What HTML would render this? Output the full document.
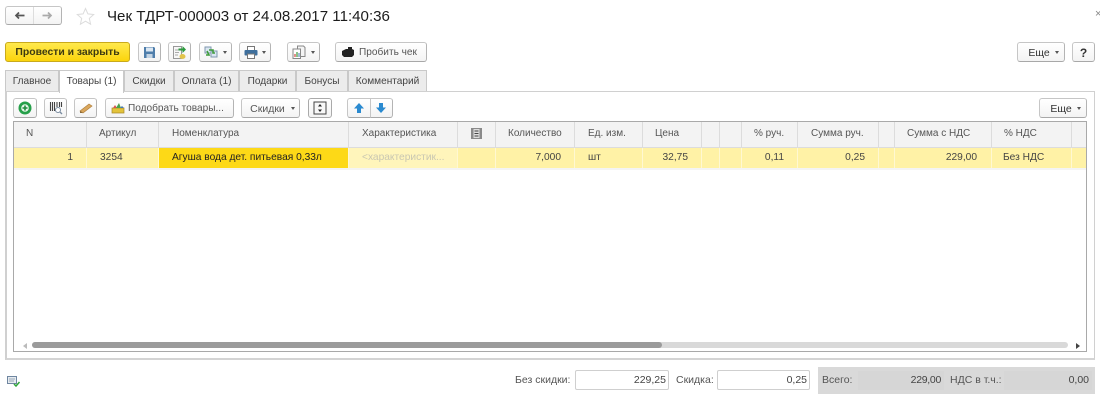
<!DOCTYPE html>
<html lang="ru"><head><meta charset="utf-8"><title>Чек</title>
<style>
html,body{margin:0;padding:0;background:#fff}
#p{position:relative;width:1100px;height:405px;overflow:hidden;background:#fff;font:10.5px/14px "Liberation Sans",sans-serif;color:#4a4a4a;filter:blur(.3px)}
#p div,#p svg{position:absolute;box-sizing:border-box}
.b{height:20px;top:42px;border:1px solid #c6c6c6;border-bottom-color:#a8a8a8;border-right-color:#b4b4b4;border-radius:3px;background:linear-gradient(#fff,#f3f3f3);text-align:center;line-height:20px;white-space:nowrap;font-size:10.1px}
.t2{top:98px}
.tab{top:70px;height:21px;background:#ececec;border:1px solid #c9c9c9;border-bottom:0;text-align:center;line-height:21px;color:#444;font-size:10.1px}
.a{width:0;height:0;border-left:2.5px solid transparent;border-right:2.5px solid transparent;border-top:3px solid #555}
.h{top:127px;white-space:nowrap;color:#555;font-size:10px}
.c{top:151px;white-space:nowrap;color:#444;font-size:10.2px}
.d{top:122px;height:25px;width:1px;background:#dcdcdc}
.e{top:148px;height:20px;width:1px;background:#fff8d2}
.f{background:#fff;border:1px solid #cfcfcf;border-radius:2px;height:20px;top:370px;text-align:right;padding-right:2px;line-height:18px;color:#444}
.r{text-align:right}
</style></head><body><div id="p">

<div class="b" style="left:5px;top:6px;width:57px;height:19px"></div>
<div style="left:33px;top:7px;width:1px;height:17px;background:#ddd"></div>
<svg style="left:14px;top:11px" width="11" height="9" viewBox="0 0 11 9"><path d="M10.500 4.500H2.500M5 1.500L2 4.500 5 7.500" fill="none" stroke="#555" stroke-width="1.700"/></svg>
<svg style="left:42px;top:11px" width="11" height="9" viewBox="0 0 11 9"><path d="M.5 4.500h8M6 1.500l3 3-3 3" fill="none" stroke="#aaa" stroke-width="1.700"/></svg>
<svg style="left:76px;top:7px" width="19" height="19" viewBox="0 0 19 19"><path d="M9.500 1.500l2.400 5.400 5.800.6-4.400 3.900 1.300 5.800-5.100-3-5.100 3 1.300-5.800L1.300 7.500l5.800-.6z" fill="#fff" stroke="#dcdcdc"/></svg>
<div style="left:107px;top:8px;font-size:15.1px;line-height:18px;color:#1c1c1c;white-space:nowrap">Чек ТДРТ-000003 от 24.08.2017 11:40:36</div>
<div style="left:1095px;top:7px;font-size:11px;color:#888">×</div>

<div class="b" style="left:5px;width:125px;background:linear-gradient(#ffe94d,#fbd40c);border-color:#c9aa1c;font-weight:bold;color:#3d3a10;font-size:10.4px">Провести и закрыть</div>
<div class="b" style="left:138px;width:23px"></div>
<svg style="left:143px;top:46px" width="13" height="13" viewBox="0 0 13 13"><path d="M1 1h10l1 1v10H1z" fill="#4f7eab"/><rect x="3" y="1.500" width="7" height="4" fill="#dbe7f2"/><rect x="3.500" y="8" width="6" height="4" fill="#c4d4e3"/></svg>
<div class="b" style="left:168px;width:23px"></div>
<svg style="left:172px;top:45px" width="15" height="15" viewBox="0 0 15 15"><path d="M1.500 1.500h8v12h-8z" fill="#f7f7f7" stroke="#999"/><path d="M3 5h5M3 7.500h4M3 10h3" stroke="#aaa"/><ellipse cx="10.500" cy="11.500" rx="3" ry="2.500" fill="#e2c44c"/><path d="M6.500 3.500h4V1l3.500 3.500-3.500 3.500V5.500h-4z" fill="#2d9a3e"/></svg>
<div class="b" style="left:199px;width:33px"></div>
<svg style="left:204px;top:46px" width="14" height="13" viewBox="0 0 14 13"><rect x="1" y="1" width="6" height="6" fill="#dbe7f2" stroke="#7f97ae"/><rect x="7" y="5" width="6" height="6" fill="#dbe7f2" stroke="#7f97ae"/><path d="M3 5l2 4h-3M5 4h4v3h2" fill="none" stroke="#3f9c3c" stroke-width="1.600"/></svg>
<div class="a" style="left:223px;top:51px"></div>
<div class="b" style="left:239px;width:32px"></div>
<svg style="left:244px;top:46px" width="14" height="13" viewBox="0 0 14 13"><rect x="3.500" y="0.500" width="7" height="4" fill="#fff" stroke="#777"/><rect x="0.500" y="4" width="13" height="5.500" rx="1" fill="#3e6f9c"/><rect x="3.500" y="8" width="7" height="4.500" fill="#fff" stroke="#777"/></svg>
<div class="a" style="left:262px;top:51px"></div>
<div class="b" style="left:287px;width:33px"></div>
<svg style="left:292px;top:45px" width="14" height="15" viewBox="0 0 14 15"><path d="M5.500 1h6l1.500 1.500v9h-7.500z" fill="#f4f4f4" stroke="#888"/><path d="M1 4h7.500v9.500H1z" fill="#fff" stroke="#888"/><path d="M3 12V9" stroke="#d9534f" stroke-width="1.300"/><path d="M5 12V7" stroke="#4aa24a" stroke-width="1.300"/><path d="M7 12V8" stroke="#4a78b0" stroke-width="1"/></svg>
<div class="a" style="left:311px;top:51px"></div>
<div class="b" style="left:335px;width:92px;padding-left:14px;color:#555">Пробить чек</div>
<svg style="left:341px;top:46px" width="14" height="12" viewBox="0 0 14 12"><path d="M1 5l4-2h2V1h4v2l2 1v5l-2 2H3L1 9z" fill="#222"/></svg>

<div class="b" style="left:1017px;width:48px;padding-right:4px;color:#333;font-size:10.5px">Еще</div><div class="a" style="left:1055px;top:51px"></div>
<div class="b" style="left:1072px;width:23px;font-weight:bold;font-size:12px;color:#333">?</div>

<div class="tab" style="left:5px;width:54px">Главное</div>
<div class="tab" style="left:124px;width:50px">Скидки</div>
<div class="tab" style="left:174px;width:65px">Оплата (1)</div>
<div class="tab" style="left:239px;width:57px">Подарки</div>
<div class="tab" style="left:296px;width:52px">Бонусы</div>
<div class="tab" style="left:348px;width:79px">Комментарий</div>

<div style="left:5px;top:91px;width:1090px;height:269px;border:1px solid #d0d0d0;border-bottom:2px solid #d4d4d4;border-left-width:2px;background:#fff"></div>
<div class="tab" style="left:59px;width:65px;height:23px;background:#fff;z-index:2">Товары (1)</div>

<div class="b t2" style="left:13px;width:24px"></div>
<svg style="left:18px;top:101px;" width="14" height="14" viewBox="0 0 14 14"><circle cx="7" cy="7" r="6.500" fill="#26a04a"/><circle cx="7" cy="7" r="3.800" fill="#e8f6ea"/><path d="M7 4.500v5M4.500 7h5" stroke="#1f8a3c" stroke-width="1.600"/></svg>
<div class="b t2" style="left:44px;width:23px"></div>
<svg style="left:49px;top:101px" width="14" height="14" viewBox="0 0 14 14"><path d="M1.500 1v9M3.500 1v9M5.500 1v9M8 1v5M10.500 1v5M12.500 1v5" stroke="#444" stroke-width="1.100"/><circle cx="9" cy="9" r="2.500" fill="#fff" stroke="#7a8ca0"/><path d="M11 11l2 2" stroke="#7a8ca0" stroke-width="1.300"/></svg>
<div class="b t2" style="left:74px;width:23px"></div>
<svg style="left:79px;top:102px" width="14" height="12" viewBox="0 0 14 12"><path d="M1 9l9-7 3 2-9 7z" fill="#d9a65c" stroke="#b07f3c" stroke-width=".7"/><path d="M1 9l3 2H1z" fill="#8a6a3a"/></svg>
<div class="b t2" style="left:105px;width:129px;padding-left:22px;padding-right:9px;text-align:left;color:#555">Подобрать товары...</div>
<svg style="left:111px;top:102px" width="14" height="12" viewBox="0 0 14 12"><path d="M1 6h12v5H1z" fill="#e3c33a" stroke="#a8892a" stroke-width=".7"/><path d="M2 6l2-3 2 3z" fill="#d9534f"/><path d="M5 6l3-5 2 5z" fill="#4aa24a"/><path d="M9 6l2-2 2 2z" fill="#4a78b0"/></svg>
<div class="b t2" style="left:241px;width:59px;padding-right:6px;color:#555;font-size:10.5px">Скидки</div><div class="a" style="left:291px;top:107px"></div>
<div class="b t2" style="left:308px;width:24px;border-color:#aaa"></div>
<svg style="left:313px;top:101px" width="14" height="14" viewBox="0 0 14 14"><rect x="1" y="1" width="12" height="12" fill="#f8f8f8" stroke="#444"/><path d="M7 3L5 5.500h4zM7 11L5 8.500h4z" fill="#222"/></svg>
<div class="b t2" style="left:347px;width:24px;border-radius:3px 0 0 3px"></div>
<div class="b t2" style="left:370px;width:23px;border-radius:0 3px 3px 0"></div>
<svg style="left:353px;top:102px" width="12" height="12" viewBox="0 0 12 12"><path d="M6 1l5 5.500H8V11H4V6.500H1z" fill="#2a8ad0"/></svg>
<svg style="left:375px;top:102px" width="12" height="12" viewBox="0 0 12 12"><path d="M6 11l5-5.500H8V1H4v4.500H1z" fill="#2a8ad0"/></svg>
<div class="b t2" style="left:1039px;width:48px;padding-right:4px;color:#333;font-size:10.5px">Еще</div><div class="a" style="left:1077px;top:107px"></div>

<div style="left:13px;top:121px;width:1074px;height:231px;border:1px solid #a9a9a9;background:#fff"></div>
<div style="left:14px;top:122px;width:1072px;height:25px;background:#f3f3f3"></div>
<div style="left:14px;top:147px;width:1072px;height:1px;background:#dcdcdc"></div>
<div style="left:14px;top:148px;width:1072px;height:20px;background:#fff2a6"></div>
<div style="left:14px;top:168px;width:1072px;height:2px;background:#f4f4f4"></div>
<div style="left:159px;top:148px;width:189px;height:20px;background:#fdd917"></div>
<div style="left:349px;top:148px;width:108px;height:20px;background:#fff5bb"></div>

<div class="d" style="left:86px"></div><div class="d" style="left:158px"></div><div class="d" style="left:348px"></div><div class="d" style="left:457px"></div><div class="d" style="left:495px"></div><div class="d" style="left:574px"></div><div class="d" style="left:642px"></div><div class="d" style="left:701px"></div><div class="d" style="left:719px"></div><div class="d" style="left:741px"></div><div class="d" style="left:797px"></div><div class="d" style="left:878px"></div><div class="d" style="left:894px"></div><div class="d" style="left:991px"></div><div class="d" style="left:1071px"></div>
<div class="e" style="left:86px"></div><div class="e" style="left:158px"></div><div class="e" style="left:348px"></div><div class="e" style="left:457px"></div><div class="e" style="left:495px"></div><div class="e" style="left:574px"></div><div class="e" style="left:642px"></div><div class="e" style="left:701px"></div><div class="e" style="left:719px"></div><div class="e" style="left:741px"></div><div class="e" style="left:797px"></div><div class="e" style="left:878px"></div><div class="e" style="left:894px"></div><div class="e" style="left:991px"></div><div class="e" style="left:1071px"></div>

<div class="h" style="left:26px">N</div>
<div class="h" style="left:99px">Артикул</div>
<div class="h" style="left:172px">Номенклатура</div>
<div class="h" style="left:362px">Характеристика</div>
<svg style="left:471px;top:128px" width="11" height="11" viewBox="0 0 11 11"><rect width="11" height="11" fill="#8a8a8a"/><rect x="2.500" y="1" width="6" height="9" fill="#ddd"/><path d="M3.500 3h4M3.500 5.500h4M3.500 8h4" stroke="#444"/></svg>
<div class="h" style="left:508px">Количество</div>
<div class="h" style="left:588px">Ед. изм.</div>
<div class="h" style="left:655px">Цена</div>
<div class="h" style="left:754px">% руч.</div>
<div class="h" style="left:811px">Сумма руч.</div>
<div class="h" style="left:907px">Сумма с НДС</div>
<div class="h" style="left:1004px">% НДС</div>

<div class="c r" style="left:50px;width:23px">1</div>
<div class="c" style="left:100px">3254</div>
<div class="c" style="left:172px;color:#222">Агуша вода дет. питьевая 0,33л</div>
<div class="c" style="left:362px;color:#c9c7b2">&lt;характеристик...</div>
<div class="c r" style="left:510px;width:51px">7,000</div>
<div class="c" style="left:588px">шт</div>
<div class="c r" style="left:650px;width:38px">32,75</div>
<div class="c r" style="left:750px;width:34px">0,11</div>
<div class="c r" style="left:820px;width:45px">0,25</div>
<div class="c r" style="left:910px;width:67px">229,00</div>
<div class="c" style="left:1003px">Без НДС</div>

<div style="left:32px;top:342px;width:1036px;height:6px;border-radius:3px;background:#d9d9d9"></div>
<div style="left:32px;top:342px;width:630px;height:6px;border-radius:3px;background:#9b9b9b"></div>
<div style="left:23px;top:343px;width:0;height:0;border:3px solid transparent;border-left:0;border-right:4px solid #bbb"></div>
<div style="left:1076px;top:343px;width:0;height:0;border:3px solid transparent;border-right:0;border-left:4px solid #444"></div>

<svg style="left:7px;top:376px" width="13" height="11" viewBox="0 0 13 11"><rect x=".5" y=".5" width="9" height="7" fill="#e6ebf0" stroke="#6f86a0"/><path d="M2 3h6M2 5h5" stroke="#9aa8b8"/><path d="M7 8l2 2 3.500-4" fill="none" stroke="#2fa63a" stroke-width="1.500"/></svg>

<div style="left:515px;top:373px;white-space:nowrap;color:#555">Без скидки:</div>
<div class="f" style="left:575px;width:94px">229,25</div>
<div style="left:676px;top:373px;white-space:nowrap;color:#555">Скидка:</div>
<div class="f" style="left:717px;width:93px">0,25</div>
<div style="left:818px;top:367px;width:277px;height:27px;background:#d9d9d9"></div>
<div style="left:858px;top:371px;width:86px;height:19px;background:#d6d6d6"></div>
<div style="left:1004px;top:371px;width:88px;height:19px;background:#d6d6d6"></div>
<div style="left:822px;top:373px;white-space:nowrap;color:#555">Всего:</div>
<div class="r" style="left:880px;top:373px;width:61px;color:#444;letter-spacing:-.3px">229,00</div>
<div style="left:950px;top:373px;white-space:nowrap;color:#555">НДС в т.ч.:</div>
<div class="r" style="left:1040px;top:373px;width:49px;color:#444">0,00</div>
</div></body></html>
